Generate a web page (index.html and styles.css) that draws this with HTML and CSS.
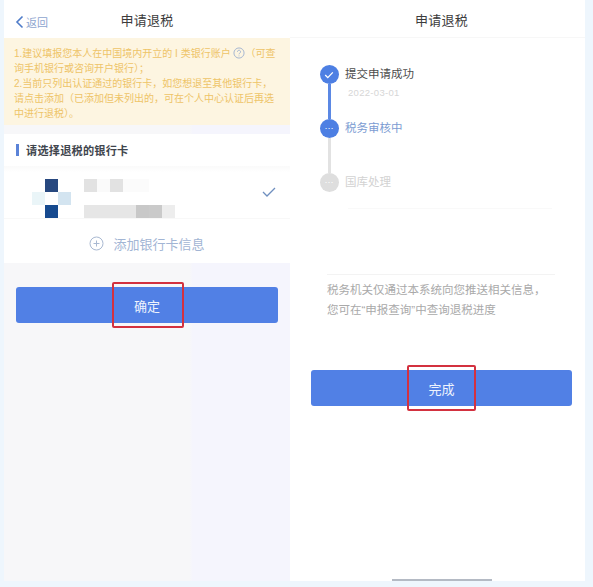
FILE: index.html
```html
<!DOCTYPE html>
<html lang="zh-CN">
<head>
    <meta charset="UTF-8">
    <title>申请退税</title>
    <link rel="stylesheet" href="styles.css">
</head>
<body>
    <div class="pagina">
        <!-- Pantalla izquierda -->
        <section class="panel panel-izq">
            <div class="cabecera">
                <a class="volver">
                    <svg width="9" height="14" viewBox="0 0 9 14"><path d="M7.5 1.5 2 7l5.5 5.5" fill="none" stroke="#4f7cc9" stroke-width="1.6"/></svg>
                    <span>返回</span>
                </a>
                <span class="titulo">申请退税</span>
            </div>
            <div class="aviso">
                <p>1.建议填报您本人在中国境内开立的 I 类银行账户 <svg class="ayuda" width="12" height="12" viewBox="0 0 13 13"><circle cx="6.5" cy="6.5" r="5.5" fill="none" stroke="#9fb2cf" stroke-width="1"/><path d="M4.8 5.2a1.7 1.7 0 1 1 2.6 1.4c-.6.4-.9.7-.9 1.3M6.5 9.2v.9" fill="none" stroke="#9fb2cf" stroke-width="1"/></svg>（可查询手机银行或咨询开户银行）；</p>
                <p>2.当前只列出认证通过的银行卡，如您想退至其他银行卡，请点击添加（已添加但未列出的，可在个人中心认证后再选中进行退税）。</p>
            </div>
            <div class="tarjetas">
                <div class="tarjetas-titulo">请选择退税的银行卡</div>
                <div class="tarjeta">
                    <div class="logo-borroso">
                        <i></i><i class="azul1"></i><i></i>
                        <i class="claro1"></i><i></i><i class="claro2"></i>
                        <i></i><i class="azul2"></i><i></i>
                    </div>
                    <div class="datos-borrosos">
                        <div class="fila-borrosa">
                            <i class="gris1"></i><i class="gris0"></i><i class="gris1"></i><i class="gris-f"></i><i class="gris-f"></i>
                        </div>
                        <div class="fila-borrosa">
                            <i class="gris2"></i><i class="gris2"></i><i class="gris2"></i><i class="gris2"></i><i class="gris3"></i><i class="gris3b"></i><i class="gris4"></i>
                        </div>
                    </div>
                    <svg class="marca" width="14" height="10" viewBox="0 0 14 10"><path d="M1 5l4 4 8-8" fill="none" stroke="#6f8fbf" stroke-width="1.3"/></svg>
                </div>
                <div class="agregar">
                    <svg width="15" height="15" viewBox="0 0 15 15"><circle cx="7.5" cy="7.5" r="6.5" fill="none" stroke="#a9b9d2" stroke-width="1"/><path d="M7.5 4.5v6M4.5 7.5h6" stroke="#a9b9d2" stroke-width="1"/></svg>
                    <span>添加银行卡信息</span>
                </div>
            </div>
            <div class="zona-boton zona-izq">
                <button class="boton">确定<span class="recuadro recuadro-izq"></span></button>
            </div>
        </section>

        <!-- Pantalla derecha -->
        <section class="panel panel-der">
            <div class="cabecera cabecera-der">
                <span class="titulo">申请退税</span>
            </div>
            <div class="pasos">
                <div class="paso">
                    <div class="riel">
                        <span class="punto">
                            <svg width="10" height="8" viewBox="0 0 10 8"><path d="M1.2 4l2.6 2.6L8.8 1.4" fill="none" stroke="#fff" stroke-width="1.3"/></svg>
                        </span>
                        <span class="linea"></span>
                    </div>
                    <div>
                        <div class="paso-texto">提交申请成功</div>
                        <div class="paso-fecha">2022-03-01</div>
                    </div>
                </div>
                <div class="paso">
                    <div class="riel">
                        <span class="punto">···</span>
                        <span class="linea linea-gris"></span>
                    </div>
                    <div class="paso-texto paso-activo">税务审核中</div>
                </div>
                <div class="paso paso-ultimo">
                    <div class="riel">
                        <span class="punto punto-gris">···</span>
                    </div>
                    <div class="paso-texto paso-pendiente">国库处理</div>
                </div>
            </div>
            <div class="separador separador-borroso"></div>
            <div class="separador"></div>
            <p class="nota">税务机关仅通过本系统向您推送相关信息，<br>您可在“申报查询”中查询退税进度</p>
            <div class="zona-boton zona-der">
                <button class="boton">完成<span class="recuadro recuadro-der"></span></button>
            </div>
            <div class="barra-inicio"></div>
        </section>
    </div>
</body>
</html>
```

FILE: styles.css
```css
html, body {
    margin: 0;
    height: 100%;
}

body {
    background-color: #eef6fd;
    font-family: "Liberation Sans", "Noto Sans CJK SC", sans-serif;
    overflow: hidden;
}

.pagina {
    display: flex;
    height: 581px;
    padding-left: 4px;
}

.panel {
    display: flex;
    flex-direction: column;
    box-sizing: border-box;
}

.panel-izq {
    width: 286px;
    background: linear-gradient(90deg, #f7f7f9 65%, #f5f5fd 66%);
}

.panel-der {
    width: 295px;
    background-color: #fff;
    position: relative;
}

/* Cabecera */
.cabecera {
    height: 38px;
    background-color: #fff;
    display: flex;
    align-items: center;
    justify-content: center;
    position: relative;
    flex-shrink: 0;
}

.cabecera-der {
    border-bottom: 1px solid #f7f7f7;
    box-sizing: border-box;
    padding: 2px 0 0 8px;
}

.titulo {
    font-size: 13px;
    color: #3c3c3c;
    letter-spacing: 0.3px;
}

.volver {
    position: absolute;
    left: 11px;
    top: 14px;
    display: flex;
    align-items: center;
    gap: 2px;
    font-size: 11px;
    color: #8ea6cf;
}

/* Aviso amarillo */
.aviso {
    height: 87px;
    box-sizing: border-box;
    padding: 8px 8px 0 10px;
    background-color: #fdf5e1;
    color: #eec468;
    font-size: 10px;
    line-height: 15px;
}

.aviso p {
    margin: 0;
}

.ayuda {
    vertical-align: -2px;
}

/* Bloque de tarjetas */
.tarjetas {
    margin-top: 9px;
    height: 129px;
    background-color: #fff;
}

.tarjetas-titulo {
    height: 32px;
    box-sizing: border-box;
    padding-left: 12px;
    display: flex;
    align-items: center;
    font-size: 11.2px;
    font-weight: bold;
    color: #40454d;
    letter-spacing: 0.2px;
}

.tarjetas-titulo::before {
    content: "";
    width: 3px;
    height: 12px;
    background-color: #5b83d8;
    margin-right: 7px;
}

.tarjeta {
    height: 53px;
    display: flex;
    align-items: flex-start;
    background: linear-gradient(#fafafa, #fff 12%);
    border-bottom: 1px solid #f8f8f8;
    box-sizing: border-box;
    padding: 13px 0 0 28px;
    position: relative;
}

.logo-borroso {
    display: grid;
    grid-template-columns: repeat(3, 13px);
    grid-auto-rows: 13px;
}

.azul1 { background-color: #27487f; }
.azul2 { background-color: #164a8f; }
.claro1 { background-color: #eaf5f8; }
.claro2 { background-color: #d3e4f0; }

.datos-borrosos {
    margin-left: 13px;
    display: flex;
    flex-direction: column;
    gap: 13px;
}

.fila-borrosa {
    display: flex;
    height: 13px;
}

.fila-borrosa i {
    width: 13px;
    height: 13px;
}

.gris0 { background-color: #fafafa; }
.gris1 { background-color: #e2e2e2; }
.gris2 { background-color: #e6e6e6; }
.gris3 { background-color: #c8c8c8; }
.gris3b { background-color: #cacaca; }
.gris4 { background-color: #ededed; }
.gris-f { background-color: #fbfbfb; }

.marca {
    position: absolute;
    right: 14px;
    top: 21px;
}

.agregar {
    height: 44px;
    box-sizing: border-box;
    padding-top: 4px;
    display: flex;
    align-items: center;
    justify-content: center;
    gap: 9px;
    font-size: 13px;
    color: #a2b5d4;
}

/* Boton */
.zona-boton {
    display: flex;
}

.zona-izq {
    padding: 24px 12px 0;
}

.zona-der {
    padding: 0 13px 0 21px;
    margin-top: 50px;
}

.boton {
    flex: 1;
    height: 36px;
    border: none;
    border-radius: 3px;
    background-color: #5180e5;
    color: #eef3fd;
    font-family: inherit;
    font-size: 13px;
    position: relative;
    padding: 0;
}

.recuadro {
    position: absolute;
    top: -5px;
    bottom: -5px;
    border: 2px solid #d3313f;
    border-radius: 2px;
    box-sizing: border-box;
}

.recuadro-izq {
    left: 96px;
    width: 72px;
}

.recuadro-der {
    left: 96px;
    width: 69px;
}

/* Pasos */
.pasos {
    padding: 27px 0 0 29px;
}

.paso {
    display: flex;
    gap: 6px;
    height: 54px;
}

.paso-ultimo {
    height: 20px;
}

.riel {
    width: 20px;
    display: flex;
    flex-direction: column;
    align-items: center;
    flex-shrink: 0;
}

.punto {
    width: 19px;
    height: 19px;
    border-radius: 50%;
    background-color: #4d7fe3;
    color: #fff;
    font-size: 9px;
    line-height: 19px;
    text-align: center;
    display: flex;
    align-items: center;
    justify-content: center;
    flex-shrink: 0;
}

.punto-gris {
    background-color: #dedede;
}

.linea {
    width: 3px;
    flex: 1;
    background-color: #5b88e4;
}

.linea-gris {
    background-color: #e2e2e2;
}

.paso-texto {
    font-size: 11.5px;
    line-height: 19px;
    color: #4d4d4d;
}

.paso-activo {
    color: #7c9cd2;
}

.paso-pendiente {
    color: #d2d2d2;
}

.paso-fecha {
    font-size: 9.5px;
    line-height: 14px;
    margin: 2px 0 0 3px;
    color: #d6d6d6;
    letter-spacing: 0.3px;
}

.separador {
    margin: 0 30px 0 37px;
    height: 1px;
    background-color: #f3f3f3;
}

.separador-borroso {
    margin: 15px 33px 65px 58px;
    background-color: #f9f9f9;
}

.nota {
    margin: 5px 0 0 37px;
    font-size: 11.5px;
    line-height: 20px;
    color: #a9a9a9;
}

.barra-inicio {
    position: absolute;
    left: 102px;
    bottom: 0;
    width: 100px;
    height: 2px;
    background-color: #b4bac4;
}
```
